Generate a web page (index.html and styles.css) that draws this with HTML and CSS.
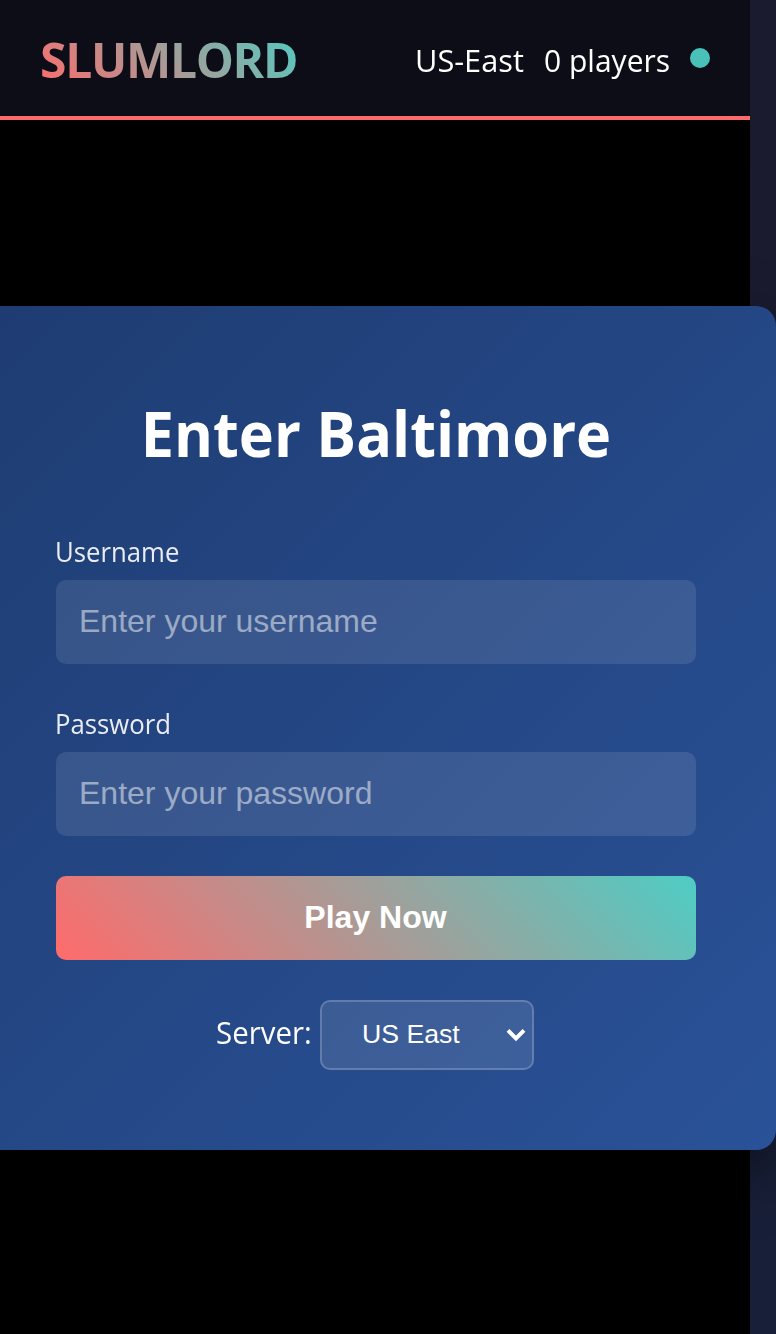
FILE: index.html
```
<!DOCTYPE html>
<html lang="en">
<head>
<meta charset="utf-8">
<title>Slumlord</title>
<link rel="stylesheet" href="styles.css">
</head>
<body>
<div class="app">
  <header class="header">
    <div class="logo"><span>SLUMLORD</span></div>
    <div class="stats">
      <span class="region">US-East</span>
      <span class="players">0 players</span>
      <span class="status"></span>
    </div>
  </header>
  <main class="game">
    <form class="card">
      <h1 class="title">Enter Baltimore</h1>
      <label class="label" for="user">Username</label>
      <input class="input" id="user" type="text" placeholder="Enter your username">
      <label class="label" for="pass">Password</label>
      <input class="input" id="pass" type="password" placeholder="Enter your password">
      <button class="play" type="button">Play Now</button>
      <div class="server">
        <span class="server-label">Server:</span>
        <div class="select">
          <span>US East</span>
          <svg class="chevron" width="20" height="14" viewBox="0 0 20 14"><path d="M2 2.3 L10 10.3 L18 2.3" fill="none" stroke="#fff" stroke-width="4"/></svg>
        </div>
      </div>
    </form>
  </main>
</div>
</body>
</html>
```
FILE: styles.css
```
* { box-sizing: border-box; }
body {
  margin: 0;
  height: 1334px;
  overflow: hidden;
  background: linear-gradient(170deg, #1a1a2e 0%, #1a1b2f 25%, #182039 100%);
  color: #fff;
  font-family: "Open Sans", "Noto Sans", sans-serif;
}
.app { width: 750px; height: 1334px; display: flex; flex-direction: column; }
.header {
  height: 120px;
  flex: none;
  padding: 0 40px;
  display: flex;
  justify-content: space-between;
  align-items: center;
  background: rgba(0, 0, 0, .5);
  border-bottom: 4px solid #ff6b6b;
}
.logo {
  font-size: 48px;
  line-height: 64px;
  font-weight: 700;
  width: 258px;
  margin-top: 4px;
  white-space: nowrap;
  letter-spacing: -1.3px;
  background: linear-gradient(45deg, #ff6b6b, #4ecdc4);
  -webkit-background-clip: text;
  background-clip: text;
  color: transparent;
}
.stats { display: flex; gap: 20px; margin-top: 4px; font-size: 31.5px; line-height: 46px; white-space: nowrap; }
.region { width: 109px; transform: scaleX(.975); transform-origin: left; }
.players { width: 126px; transform: scaleX(.953); transform-origin: left; }
.status { width: 20px; height: 20px; margin-top: 11px; border-radius: 50%; background: #4ecdc4; opacity: .94; }
.game {
  flex: 1;
  background: #000;
  padding-top: 186px;
  display: flex;
  justify-content: center;
  align-items: flex-start;
}
.card {
  width: 800px;
  height: 844px;
  flex: none;
  margin: 0 -26px 0 -24px;
  padding: 80px;
  border-radius: 20px;
  background: linear-gradient(135deg, #1e3c72 0%, #2a5298 100%);
  box-shadow: 0 20px 60px rgba(0, 0, 0, .5);
  display: flex;
  flex-direction: column;
}
.title {
  margin: 0 0 46px;
  font-size: 63.5px;
  line-height: 94px;
  padding-bottom: 2px;
  font-weight: 700;
  text-align: center;
  white-space: nowrap;
  transform: scaleX(.935);
}
.label {
  font-size: 27.5px;
  line-height: 38px;
  height: 52px;
  padding-top: 5px;
  margin-left: -1px;
  opacity: .9;
  transform: scaleX(.936);
  transform-origin: left;
}
.input {
  height: 84px;
  margin: 0 0 36px;
  padding: 0 23px 2px;
  border: 0;
  border-radius: 10px;
  background: rgba(255, 255, 255, .1);
  font: 32px "Liberation Sans", Arial, sans-serif;
  color: #fff;
}
.input::placeholder { color: rgba(255, 255, 255, .5); opacity: 1; }
.play {
  height: 84px;
  margin-top: 4px;
  padding: 0 7px 2px 6px;
  flex: none;
  border: 0;
  border-radius: 10px;
  background: linear-gradient(45deg, #ff6b6b, #4ecdc4);
  font: 700 32px "Liberation Sans", Arial, sans-serif;
  color: #fff;
}
.server { margin-top: 40px; display: flex; justify-content: center; align-items: center; font-size: 31.5px; padding-right: 2px; }
.server-label {
  display: block;
  width: 104px;
  line-height: 44px;
  padding-bottom: 6px;
  white-space: nowrap;
  transform: scaleX(.935);
  transform-origin: left;
}
.select {
  width: 214px;
  height: 70px;
  padding: 0 6px 1px 40px;
  display: flex;
  align-items: center;
  justify-content: space-between;
  border: 2px solid rgba(255, 255, 255, .2);
  border-radius: 10px;
  background: rgba(255, 255, 255, .1);
  font: 26.67px "Liberation Sans", Arial, sans-serif;
}
```
